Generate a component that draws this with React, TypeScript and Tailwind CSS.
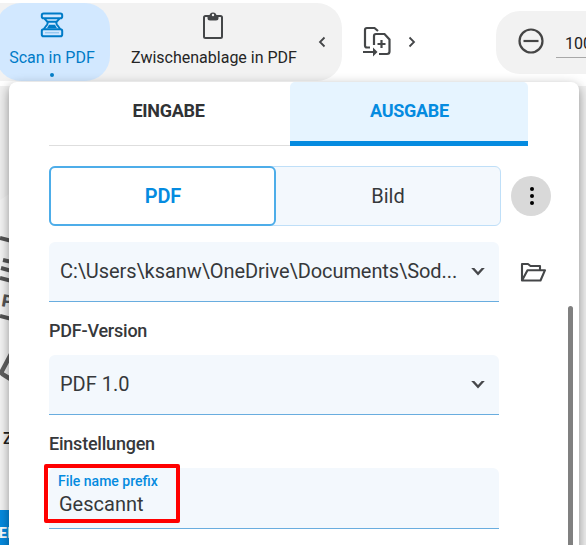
import React from 'react';

function Chevron() {
  return (
    <svg className="h-5 w-5 shrink-0" viewBox="0 0 20 20" fill="#46484b">
      <path d="M3.200 7 H6.300 L10 11 L13.700 7 H16.800 L10 14.600 Z" />
    </svg>
  );
}

function SelectField({ children }: { children: React.ReactNode }) {
  return (
    <div className="flex h-[60px] w-[450px] items-center justify-between rounded-t-md border-b border-[#69addf] bg-[#f3f8fd] pr-[11px] pb-[2px] pl-[11px] text-xl text-[#36383b]">
      {children}
      <Chevron />
    </div>
  );
}

function Toolbar() {
  return (
    <header className="flex h-[86px] w-[586px] items-start overflow-hidden bg-white pt-[3px]">
      <div className="flex h-[78px] w-[342px] shrink-0 rounded-r-[25px] bg-[#f2f2f2]">
        <div className="-ml-1 flex h-[78px] w-[114px] shrink-0 flex-col items-center rounded-[25px] bg-[#d2e8ff] pr-[2px] text-[#007bc7]">
          <svg className="mt-[9px] h-[26px] w-[24px] shrink-0" viewBox="0 0 24 26" fill="none" stroke="currentColor" strokeWidth="2">
            <rect x="1.800" y="1.600" width="20.400" height="4.600" rx="1.800" />
            <path d="M4.500 6.500 L7.200 9.500 Q8.200 11 7.200 12.500 L3.800 17 M19.500 6.500 L16.800 9.500 Q15.800 11 16.800 12.500 L20.200 17 M7.500 9.800 H16.500" />
            <rect x="1.800" y="17.200" width="20.400" height="7" rx="1.800" />
            <path d="M9 12.800 H15 L17 16.300 H7 Z" fill="currentColor" stroke="none" />
            <path d="M5 20.800 H19" strokeWidth="1" opacity=".4" />
          </svg>
          <span className="mt-[8px] text-base leading-6 font-[450] whitespace-nowrap">Scan in PDF</span>
          <span className="mt-[3px] h-1 w-1 shrink-0 rounded-full bg-[#087fc8]" />
        </div>
        <div className="ml-[21px] flex w-[166px] shrink-0 flex-col items-center text-[#252525]">
          <svg className="mt-2 mr-[2px] h-7 w-[22px] shrink-0" viewBox="0 0 22 28" fill="none" stroke="#444648" strokeWidth="2">
            <rect x="2" y="5" width="18" height="22" rx="1.500" />
            <path d="M5.500 5 H7.500 A3.500 3.500 0 0 1 14.500 5 H16.500 V7 Q16.500 9.500 14 9.500 H8 Q5.500 9.500 5.500 7 Z" fill="#444648" stroke="none" />
            <circle cx="11" cy="4" r="1.200" fill="#f2f2f2" stroke="none" />
          </svg>
          <span className="mt-[7px] text-base leading-6 font-[450] whitespace-nowrap">Zwischenablage in PDF</span>
        </div>
        <svg className="mt-[33px] ml-[21px] h-3 w-[9px]" viewBox="0 0 9 12" fill="none" stroke="#444648" strokeWidth="1.800">
          <path d="M6.500 1.500 L2 6 L6.500 10.500" />
        </svg>
      </div>
      <svg className="mt-[23px] ml-[20px] h-[31px] w-[31px] shrink-0" viewBox="0 0 31 31" fill="none" stroke="#444648" strokeWidth="2.200">
        <path d="M8 21.500 H5 Q3 21.500 3 19.500 V4 Q3 2 5 2 H12.500 L16 5" />
        <path d="M12 19 V10 Q12 8 14 8 H22.500 L27.500 13.500 V25.500 Q27.500 28 25 28 H17" />
        <path d="M19.500 14 V22 M15.500 18 H23.500 M1 26 H11" />
        <path d="M11 21.500 L15.500 26 L11 30.500 Z" fill="#444648" stroke="none" />
      </svg>
      <svg className="mt-[33px] ml-[15px] h-3 w-[9px] shrink-0" viewBox="0 0 9 12" fill="none" stroke="#444648" strokeWidth="1.800">
        <path d="M1.500 1.500 L6 6 L1.500 10.500" />
      </svg>
      <div className="mt-2 ml-[79px] flex h-[63px] w-[140px] shrink-0 rounded-l-[24px] bg-[#f2f2f2]">
        <svg className="mt-[17px] ml-[22px] h-[26px] w-[26px] shrink-0" viewBox="0 0 26 26" fill="none" stroke="#454545" strokeWidth="2.200">
          <circle cx="13" cy="13" r="11.500" />
          <path d="M5.500 13 H20.500" />
        </svg>
        <div className="mt-[19px] ml-3 h-[28px] w-20 border-b border-[#a8a8a8] pl-[9px] text-base leading-[28px] text-[#202020]">100%</div>
      </div>
    </header>
  );
}

function PagePreview() {
  return (
    <main className="h-[459px] w-[586px] overflow-hidden bg-[#f0f0f0]">
      <svg className="h-[459px] w-[12px]" viewBox="0 86 12 459" fontFamily="Roboto, sans-serif">
        <path d="M0 200 L12 192 V545 H0 Z" fill="#f5f5f5" />
        <path d="M0 238 L12 241 M3 260 L12 262 M1 268 L12 271 M0 278 L12 281 M0 316 L12 319" stroke="#555" strokeWidth="4" />
        <text x="1" y="306" fontSize="17" fontWeight="900" fill="#555" transform="rotate(10 1 306)">P</text>
        <path d="M11 354 L2 371 Q1 374 4 375 L12 380" stroke="#606060" strokeWidth="4.500" fill="none" />
        <text x="3" y="444" fontSize="16" fontWeight="500" fill="#222">Z</text>
        <rect y="510" width="12" height="35" fill="#068be0" />
        <text x="-1" y="538" fontSize="14" fontWeight="700" fill="white">EI</text>
      </svg>
    </main>
  );
}

export default function App() {
  return (
    <div className="relative h-[545px] w-[586px] overflow-hidden bg-white font-['Roboto',sans-serif] text-[#36383b]">
      <Toolbar />
      <PagePreview />
      <section className="absolute top-[82px] left-[9px] h-[483px] w-[570px] rounded-t-lg bg-white shadow-[0_4px_12px_rgba(0,0,0,0.42)]">
        <nav className="ml-10 flex h-16">
          <div className="flex w-[241px] justify-center border-b border-[#dedede] pt-[17px] pr-[2px] text-lg leading-6 font-bold tracking-[-0.3px] text-[#303235]">
            <span>EINGABE</span>
          </div>
          <div className="flex w-[238px] justify-center rounded-t-[5px] border-b-[5px] border-[#058be0] bg-[#e6f4ff] pt-[17px] pl-[1px] text-lg leading-6 font-bold tracking-[-0.3px] text-[#058be0]">
            <span>AUSGABE</span>
          </div>
        </nav>
        <div className="mt-5 ml-10 flex h-[60px] items-center">
          <div className="flex h-[60px] w-[452px] rounded-md border border-[#bfdff8] bg-[#f3f8fd] text-xl">
            <div className="-my-px -ml-px flex w-[227px] items-center justify-center rounded-md border-2 border-[#4dade9] bg-white pl-px font-semibold tracking-[-0.2px] text-[#058be0]">PDF</div>
            <div className="flex flex-1 items-center justify-center">Bild</div>
          </div>
          <div className="ml-[10px] flex h-10 w-10 flex-col items-center justify-center gap-[3px] rounded-full bg-[#d9d9d9] pl-px">
            <i className="h-1 w-1 rounded-full bg-black" />
            <i className="h-1 w-1 rounded-full bg-black" />
            <i className="h-1 w-1 rounded-full bg-black" />
          </div>
        </div>
        <div className="mt-4 ml-10 flex items-center">
          <SelectField><span className="tracking-[-0.075px] whitespace-nowrap">C:\Users\ksanw\OneDrive\Documents\Sod...</span></SelectField>
          <svg className="ml-[21px] h-[22px] w-[27px]" viewBox="0 0 27 22" fill="none" stroke="#444648" strokeWidth="2.100" strokeLinejoin="round">
            <path d="M2 19.500 V3 H8 L10.500 5 H20 V9 M2 19.500 L7.500 9.200 H25 L20.500 19.500 Z" />
          </svg>
        </div>
        <div className="mt-[17px] ml-10 text-lg leading-6 font-medium tracking-[-0.22px]">PDF-Version</div>
        <div className="mt-3 ml-10"><SelectField>PDF 1.0</SelectField></div>
        <div className="mt-[17px] ml-10 text-lg leading-6 font-medium tracking-[-0.22px]">Einstellungen</div>
        <div className="mt-3 ml-10 h-[61px] w-[450px] rounded-t-md border-b border-[#69addf] bg-[#f3f8fd] pt-1 pl-[10px]">
          <div className="-ml-px text-sm leading-[18px] font-medium text-[#058be0]">File name prefix</div>
          <div className="text-xl leading-7">Gescannt</div>
        </div>
        <div className="absolute top-[224px] right-[6px] h-[260px] w-[5px] rounded-t-full bg-[#808080]" />
        <div className="absolute top-[382px] left-[35px] h-[59px] w-[136px] rounded-[2px] border-4 border-[#ff0000]" />
      </section>
    </div>
  );
}
